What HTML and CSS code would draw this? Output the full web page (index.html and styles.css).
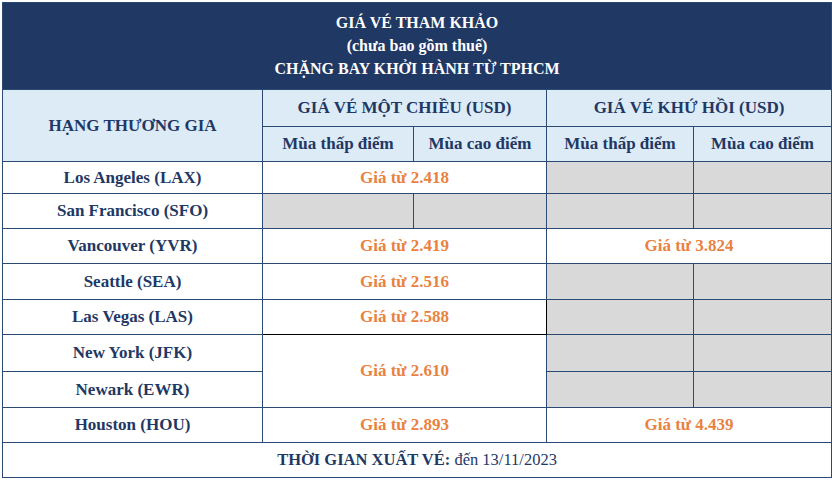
FILE: index.html
```html
<!DOCTYPE html>
<html lang="vi">
<head>
<meta charset="utf-8">
<title>Giá vé tham khảo</title>
<link rel="stylesheet" href="styles.css">
</head>
<body>
<table class="fares">
  <colgroup>
    <col class="c1"><col class="c2"><col class="c3"><col class="c4"><col class="c5">
  </colgroup>
  <tr class="r-title">
    <td colspan="5" class="title">GIÁ VÉ THAM KHẢO<br>(chưa bao gồm thuế)<br>CHẶNG BAY KHỞI HÀNH TỪ TPHCM</td>
  </tr>
  <tr class="r-h1">
    <td rowspan="2" class="head">HẠNG THƯƠNG GIA</td>
    <td colspan="2" class="head">GIÁ VÉ MỘT CHIỀU (USD)</td>
    <td colspan="2" class="head">GIÁ VÉ KHỨ HỒI (USD)</td>
  </tr>
  <tr class="r-h2">
    <td class="head">Mùa thấp điểm</td>
    <td class="head">Mùa cao điểm</td>
    <td class="head">Mùa thấp điểm</td>
    <td class="head">Mùa cao điểm</td>
  </tr>
  <tr class="r-a">
    <td class="city">Los Angeles (LAX)</td>
    <td colspan="2" class="price">Giá từ 2.418</td>
    <td class="na"></td><td class="na"></td>
  </tr>
  <tr class="r-b">
    <td class="city">San Francisco (SFO)</td>
    <td class="na"></td><td class="na"></td>
    <td class="na"></td><td class="na"></td>
  </tr>
  <tr class="r-b">
    <td class="city">Vancouver (YVR)</td>
    <td colspan="2" class="price">Giá từ 2.419</td>
    <td colspan="2" class="price">Giá từ 3.824</td>
  </tr>
  <tr class="r-c">
    <td class="city">Seattle (SEA)</td>
    <td colspan="2" class="price">Giá từ 2.516</td>
    <td class="na"></td><td class="na"></td>
  </tr>
  <tr class="r-b">
    <td class="city">Las Vegas (LAS)</td>
    <td colspan="2" class="price dark">Giá từ 2.588</td>
    <td class="na"></td><td class="na"></td>
  </tr>
  <tr class="r-d">
    <td class="city">New York (JFK)</td>
    <td colspan="2" rowspan="2" class="price">Giá từ 2.610</td>
    <td class="na"></td><td class="na"></td>
  </tr>
  <tr class="r-c">
    <td class="city">Newark (EWR)</td>
    <td class="na"></td><td class="na"></td>
  </tr>
  <tr class="r-b">
    <td class="city">Houston (HOU)</td>
    <td colspan="2" class="price">Giá từ 2.893</td>
    <td colspan="2" class="price">Giá từ 4.439</td>
  </tr>
  <tr class="r-b">
    <td colspan="5" class="foot"><b>THỜI GIAN XUẤT VÉ:</b> đến 13/11/2023</td>
  </tr>
</table>
</body>
</html>
```

FILE: styles.css
```css
html, body {
  margin: 0;
  padding: 0;
  background: #ffffff;
}
body {
  padding: 2px 0 0 2px;
  font-family: "Liberation Serif", "Times New Roman", serif;
}
.fares {
  border-collapse: collapse;
  table-layout: fixed;
  width: 829px;
  font-size: 17px;
  color: #1f3864;
}
.c1 { width: 260px; }
.c2 { width: 151px; }
.c3 { width: 133px; }
.c4 { width: 147px; }
.c5 { width: 138px; }
.fares td {
  border: 1px solid #2a4a74;
  padding: 0;
  text-align: center;
  vertical-align: middle;
  font-weight: bold;
  line-height: 20px;
}
.r-title { height: 87px; }
.r-h1 { height: 37px; }
.r-h2 { height: 35px; }
.r-a { height: 32px; }
.r-b { height: 35px; }
.r-c { height: 36px; }
.r-d { height: 37px; }
.fares td.title {
  background: #203864;
  color: #ffffff;
  font-size: 16px;
  line-height: 23px;
  padding-bottom: 1px;
}
.fares td.head {
  background: #ddebf7;
  color: #1f3864;
}
.fares td.na {
  background: #d9d9d9;
}
.fares td.price {
  color: #e9823f;
  background: #ffffff;
}
.fares td.price.dark {
  border: 1px solid #000000;
}
.fares td.foot {
  font-weight: normal;
  font-size: 16.5px;
}
.fares td.foot b {
  font-weight: bold;
}
```
